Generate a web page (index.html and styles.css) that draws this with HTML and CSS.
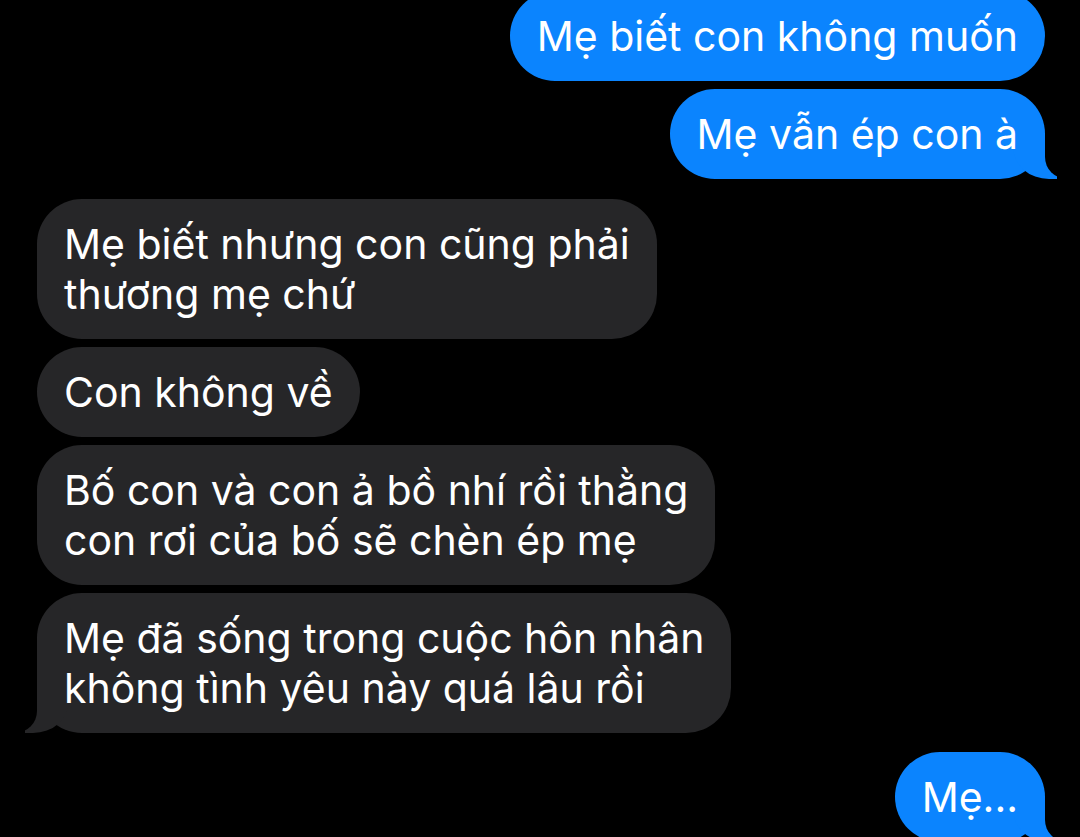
FILE: index.html
```html
<!DOCTYPE html>
<html lang="vi">
<head>
    <meta charset="UTF-8">
    <meta name="viewport" content="width=device-width, initial-scale=1.0">
    <title>Tin nhắn</title>
    <link rel="stylesheet" href="styles.css">
</head>
<body>
    <div class="thread">
        <div class="bubble sent">Mẹ biết con không muốn</div>
        <div class="bubble sent tail">Mẹ vẫn ép con à</div>

        <div class="bubble received group-start">Mẹ biết nhưng con cũng phải<br>thương mẹ chứ</div>
        <div class="bubble received">Con không về</div>
        <div class="bubble received">Bố con và con ả bồ nhí rồi thằng<br>con rơi của bố sẽ chèn ép mẹ</div>
        <div class="bubble received tail">Mẹ đã sống trong cuộc hôn nhân<br>không tình yêu này quá lâu rồi</div>

        <div class="bubble sent tail group-end">Mẹ...</div>
    </div>
</body>
</html>
```

FILE: styles.css
```css
body {
    margin: 0;
    background-color: #000000;
    font-family: 'Inter', 'Liberation Sans', sans-serif;
    overflow: hidden;
    height: 837px;
}

.thread {
    display: flex;
    flex-direction: column;
    gap: 8px;
    margin-top: -9px;
    padding: 0 35px 0 37px;
}

.bubble {
    position: relative;
    z-index: 0;
    max-width: 720px;
    padding: 20px 27px;
    border-radius: 45px;
    font-size: 41px;
    line-height: 50px;
    color: #ffffff;
}

.sent {
    align-self: flex-end;
    background-color: #0b84fe;
}

.received {
    align-self: flex-start;
    background-color: #262628;
}

.group-start {
    margin-top: 12px;
}

.group-end {
    margin-top: 11px;
}

/* tails */
.tail::before,
.tail::after {
    content: "";
    position: absolute;
    z-index: -1;
    bottom: 0;
    height: 46px;
}

.sent.tail::before {
    right: -12px;
    width: 44px;
    background-color: #0b84fe;
    border-bottom-left-radius: 36px 32px;
}

.sent.tail::after {
    right: -56px;
    width: 56px;
    background-color: #000000;
    border-bottom-left-radius: 22px;
}

.received.tail::before {
    left: -12px;
    width: 44px;
    background-color: #262628;
    border-bottom-right-radius: 36px 32px;
}

.received.tail::after {
    left: -56px;
    width: 56px;
    background-color: #000000;
    border-bottom-right-radius: 22px;
}
```
